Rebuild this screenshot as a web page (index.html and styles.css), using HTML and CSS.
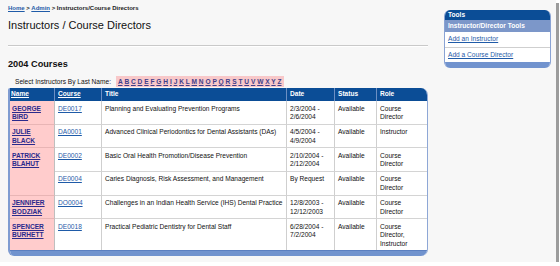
FILE: index.html
```html
<!DOCTYPE html>
<html>
<head>
<meta charset="utf-8">
<link rel="stylesheet" href="styles.css">
</head>
<body>
<div class="frame">
  <div class="main">
    <div class="crumb"><a href="#">Home</a> &gt; <a href="#">Admin</a> &gt; Instructors/Course Directors</div>
    <h1 class="title">Instructors / Course Directors</h1>
    <hr class="rule">
    <h2 class="section">2004 Courses</h2>
    <div class="select-row">
      <span class="select-label">Select Instructors By Last Name:</span>
      <span class="alpha"><a href="#">A</a> <a href="#">B</a> <a href="#">C</a> <a href="#">D</a> <a href="#">E</a> <a href="#">F</a> <a href="#">G</a> <a href="#">H</a> <a href="#">I</a> <a href="#">J</a> <a href="#">K</a> <a href="#">L</a> <a href="#">M</a> <a href="#">N</a> <a href="#">O</a> <a href="#">P</a> <a href="#">Q</a> <a href="#">R</a> <a href="#">S</a> <a href="#">T</a> <a href="#">U</a> <a href="#">V</a> <a href="#">W</a> <a href="#">X</a> <a href="#">Y</a> <a href="#">Z</a></span>
    </div>
    <div class="grid">
      <table class="courses">
        <colgroup>
          <col class="c-name"><col class="c-course"><col class="c-title"><col class="c-date"><col class="c-status"><col class="c-role">
        </colgroup>
        <thead>
          <tr><th><a href="#">Name</a></th><th><a href="#">Course</a></th><th>Title</th><th>Date</th><th>Status</th><th class="last">Role</th></tr>
        </thead>
        <tbody>
          <tr><td class="name"><a href="#">GEORGE<br>BIRD</a></td><td class="code"><a href="#">DE0017</a></td><td>Planning and Evaluating Prevention Programs</td><td>2/3/2004 -<br>2/6/2004</td><td>Available</td><td class="last">Course<br>Director</td></tr>
          <tr><td class="name"><a href="#">JULIE<br>BLACK</a></td><td class="code"><a href="#">DA0001</a></td><td>Advanced Clinical Periodontics for Dental Assistants (DAs)</td><td>4/5/2004 -<br>4/9/2004</td><td>Available</td><td class="last">Instructor</td></tr>
          <tr><td class="name" rowspan="2"><a href="#">PATRICK<br>BLAHUT</a></td><td class="code"><a href="#">DE0002</a></td><td>Basic Oral Health Promotion/Disease Prevention</td><td>2/10/2004 -<br>2/12/2004</td><td>Available</td><td class="last">Course<br>Director</td></tr>
          <tr><td class="code"><a href="#">DE0004</a></td><td>Caries Diagnosis, Risk Assessment, and Management</td><td>By Request</td><td>Available</td><td class="last">Course<br>Director</td></tr>
          <tr><td class="name"><a href="#">JENNIFER<br>BODZIAK</a></td><td class="code"><a href="#">DO0004</a></td><td>Challenges in an Indian Health Service (IHS) Dental Practice</td><td>12/8/2003 -<br>12/12/2003</td><td>Available</td><td class="last">Course<br>Director</td></tr>
          <tr class="end"><td class="name"><a href="#">SPENCER<br>BURHETT</a></td><td class="code"><a href="#">DE0018</a></td><td>Practical Pediatric Dentistry for Dental Staff</td><td>6/28/2004 -<br>7/2/2004</td><td>Available</td><td class="last">Course<br>Director,<br>Instructor</td></tr>
        </tbody>
      </table>
      <div class="grid-foot"></div>
    </div>
  </div>
  <div class="side">
    <div class="tools">
      <div class="tools-head">Tools</div>
      <div class="tools-sub">Instructor/Director Tools</div>
      <div class="tools-item first"><a href="#">Add an Instructor</a></div>
      <div class="tools-item"><a href="#">Add a Course Director</a></div>
      <div class="tools-foot"></div>
    </div>
  </div>
</div>
</body>
</html>
```

FILE: styles.css
```css
html, body {
  margin: 0;
  padding: 0;
  background: #ffffff;
}
body {
  font-family: "Liberation Sans", Arial, sans-serif;
  color: #111;
}
.frame {
  width: 556px;
  height: 262px;
  background: #f7f7f7;
  box-shadow: 3px 3px 0 #9c9c9c;
  display: flex;
  align-items: flex-start;
}
.main {
  width: 420px;
  padding-left: 8px;
}
.crumb {
  margin-top: 5px;
  font-size: 6px;
  line-height: 7px;
  font-weight: bold;
  color: #222;
}
.crumb a {
  color: #1f5ba8;
}
.title {
  margin: 7px 0 0;
  font-size: 11px;
  line-height: 13px;
  font-weight: normal;
  color: #111;
}
.rule {
  margin: 13px 0 0;
  height: 0;
  border: none;
  border-top: 1px solid #c9c9c9;
  border-bottom: 1px solid #ffffff;
}
.section {
  margin: 11.8px 0 0;
  font-size: 9.2px;
  line-height: 11px;
  font-weight: bold;
  color: #111;
}
.select-row {
  margin-top: 6px;
  display: flex;
  align-items: center;
  height: 11px;
  font-size: 6.6px;
}
.select-label {
  margin-left: 7px;
  color: #111;
}
.alpha {
  margin-left: 5px;
  background: #f8c8c9;
  height: 11px;
  line-height: 11px;
  padding: 0 2px;
  font-weight: bold;
}
.alpha a {
  color: #3f3f8a;
}
.grid {
  margin-top: 1.5px;
  width: 417px;
  background: #ffffff;
  border-left: 2px solid #7f9cd1;
  border-right: 1px solid #8ea7d6;
  border-radius: 2px 7px 7px 6px;
  overflow: hidden;
}
.courses {
  width: 417px;
  table-layout: fixed;
  border-collapse: separate;
  border-spacing: 0;
  font-size: 6.6px;
  line-height: 8.6px;
}
.c-name { width: 45px; }
.c-course { width: 47px; }
.c-title { width: 185px; }
.c-date { width: 48px; }
.c-status { width: 42px; }
.c-role { width: 50px; }
.courses th {
  background: #0b4d96;
  color: #ffffff;
  font-weight: bold;
  text-align: left;
  padding: 2.2px 2px 2.2px 3px;
  border-right: 1px solid #6c8fc4;
}
.courses th:first-child {
  padding-left: 1px;
}
.courses th a {
  color: #ffffff;
}
.courses td {
  vertical-align: top;
  padding: 3.4px 2px 2px 3px;
  border-right: 1px solid #cfcfcf;
  border-bottom: 1px solid #d4d4d4;
  color: #111;
  overflow: hidden;
  white-space: nowrap;
}
.courses .last {
  border-right: none;
}
.courses td.name {
  background: #ffcccc;
  font-weight: bold;
  padding-left: 2px;
  border-bottom-color: #e8b5b5;
  border-right-color: #bfbfbf;
}
.courses td.name a {
  color: #2a2a8c;
}
.courses td.code a {
  color: #1f5ba8;
}
.courses .end td {
  border-bottom: none;
}
.grid-foot {
  height: 5px;
  background: #7193ce;
  border-top: 1px solid #5b7fc0;
}
.side {
  margin-left: 16px;
  margin-top: 10px;
  width: 107px;
}
.tools {
  border-radius: 6px;
  overflow: hidden;
  background: #ffffff;
  border-left: 1px solid #8aa3d4;
  border-right: 1px solid #8aa3d4;
  font-size: 6.6px;
}
.tools-head {
  background: #0b4d96;
  color: #ffffff;
  font-weight: bold;
  height: 10px;
  line-height: 10px;
  padding-left: 3px;
}
.tools-sub {
  background: #7c97c9;
  color: #ffffff;
  font-weight: bold;
  height: 11.7px;
  line-height: 11.7px;
  padding-left: 3px;
}
.tools-item {
  padding: 3px 3px;
  line-height: 8px;
}
.tools-item.first {
  border-bottom: 1px solid #cfcfcf;
  padding-top: 3.5px;
  padding-bottom: 3.5px;
}
.tools-item a {
  color: #1f5ba8;
}
.tools-foot {
  height: 6px;
  background: #7193ce;
}
```
